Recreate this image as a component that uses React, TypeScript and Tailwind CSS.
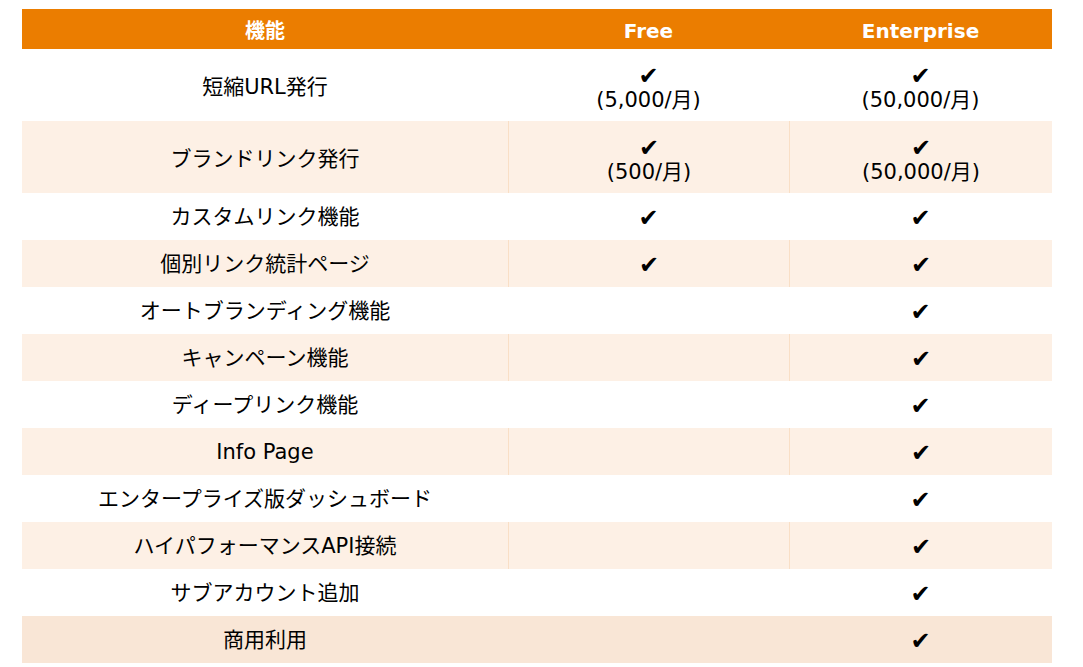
const rows: { name: string; free: string | null; ent: string | null; freeNote?: string; entNote?: string }[] = [
  { name: "短縮URL発行", free: "✔", freeNote: "(5,000/月)", ent: "✔", entNote: "(50,000/月)" },
  { name: "ブランドリンク発行", free: "✔", freeNote: "(500/月)", ent: "✔", entNote: "(50,000/月)" },
  { name: "カスタムリンク機能", free: "✔", ent: "✔" },
  { name: "個別リンク統計ページ", free: "✔", ent: "✔" },
  { name: "オートブランディング機能", free: null, ent: "✔" },
  { name: "キャンペーン機能", free: null, ent: "✔" },
  { name: "ディープリンク機能", free: null, ent: "✔" },
  { name: "Info Page", free: null, ent: "✔" },
  { name: "エンタープライズ版ダッシュボード", free: null, ent: "✔" },
  { name: "ハイパフォーマンスAPI接続", free: null, ent: "✔" },
  { name: "サブアカウント追加", free: null, ent: "✔" },
  { name: "商用利用", free: null, ent: "✔" },
]

function Cell({ mark, note, border, pad }: { mark: string | null; note?: string; border: string; pad: string }) {
  return (
    <div className={`flex flex-col items-center justify-center ${pad} ${border}`}>
      {mark && <span className="text-[24px] leading-[24px]">{mark}</span>}
      {note && <span className="text-[21px] leading-[24px]">{note}</span>}
    </div>
  )
}

export default function App() {
  return (
    <div
      className="bg-white w-[1083px] h-[667px] pt-[9px] pl-[22px] text-black"
      style={{ fontFamily: '"DejaVu Sans", "Noto Sans CJK JP", sans-serif' }}
    >
      <div className="w-[1030px]">
        <div className="grid grid-cols-[486px_281px_263px] h-[40px] bg-[#eb7d00] text-white font-bold text-[20px] pt-[4px]">
          <div className="flex items-center justify-center">機能</div>
          <div className="flex items-center justify-center">Free</div>
          <div className="flex items-center justify-center">Enterprise</div>
        </div>
        {rows.map((r, i) => {
          const last = i === rows.length - 1
          const shaded = i % 2 === 1
          const bg = last ? "bg-[#f9e6d6]" : shaded ? "bg-[#fdf0e5]" : "bg-white"
          const border = shaded && !last ? "border-l border-[#f9dfc6]" : ""
          const tall = !!r.freeNote
          const pad = tall ? "pt-[5px]" : "pt-[3px]"
          return (
            <div
              key={r.name}
              className={`grid grid-cols-[486px_281px_263px] ${tall ? "h-[72px]" : "h-[47px]"} ${bg} text-[21px]`}
            >
              <div className={`flex items-center justify-center ${pad}`}>{r.name}</div>
              <Cell mark={r.free} note={r.freeNote} border={border} pad={pad} />
              <Cell mark={r.ent} note={r.entNote} border={border} pad={pad} />
            </div>
          )
        })}
      </div>
    </div>
  )
}
